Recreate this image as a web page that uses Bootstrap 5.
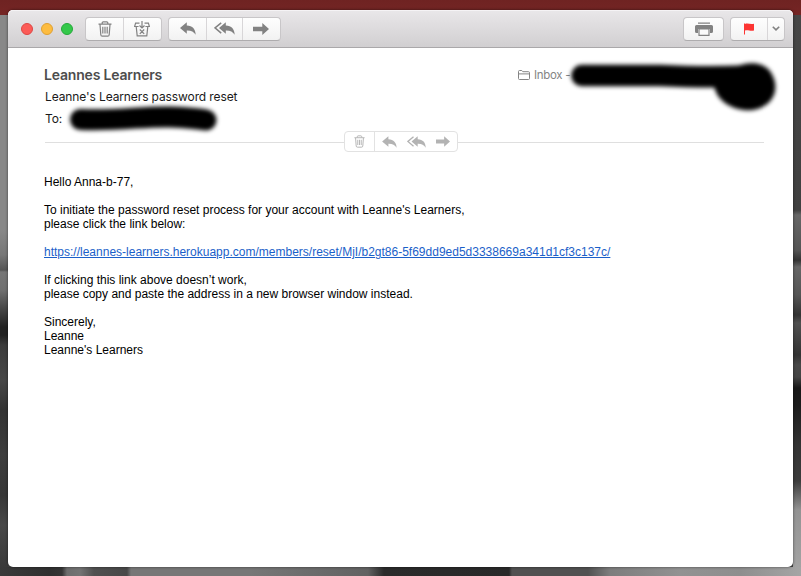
<!DOCTYPE html>
<html lang="en">
<head>
<meta charset="utf-8">
<title>Leanne's Learners password reset</title>
<meta name="viewport" content="width=device-width, initial-scale=1">
<link href="https://cdn.jsdelivr.net/npm/bootstrap@5.3.0/dist/css/bootstrap.min.css" rel="stylesheet">
<style>
body{height:576px;padding:10px 8px 9px;font-family:Inter,"Liberation Sans",sans-serif;font-size:12px;
 background:
 linear-gradient(#6f2322,#752524) 0 0/100% 15px no-repeat,
 linear-gradient(90deg,#3a3a3a 0,#303030 50px,#353535 62px,#6d6d6d 67px,#747474 80px,#505050 94px,#484848 127px,#777 131px,#777 250px,#626262 368px,#2b2b2b 384px,#292929 509px,#515151 512px,#515151 588px,#7d7d7d 610px,#929292 680px,#8e8e8e 740px,#a5a5a5 801px) 0 567px/100% 9px no-repeat,
 linear-gradient(#888 0,#888 215px,#777 240px,#555 255px,#777 257px,#707070 275px,#4a4a4a 292px,#222 312px,#222 320px,#3c3c3c 330px,#474747 365px,#333 395px,#3d3d3d 440px,#373737 480px,#484848 510px,#3a3a3a 552px) 0 15px/8px 552px no-repeat,
 linear-gradient(#464646 0,#404040 195px,#666 200px,#555 235px,#333 245px,#666 252px,#555 280px,#333 300px,#505050 308px,#333 340px,#484848 350px,#444 362px,#181818 373px,#1c1c1c 390px,#333 430px,#3c3c3c 466px,#939393 495px,#a3a3a3 552px) 793px 15px/8px 552px no-repeat #444}
svg{display:block;flex:none}
.mail-window{height:557px;border-radius:5px;box-shadow:0 0 3px rgba(0,0,0,.55)}
.toolbar{height:38px;padding:0 8px 0 13px;background:linear-gradient(#e9e7e9,#d1cfd1);border-bottom:1px solid #aaa8aa;border-radius:5px 5px 0 0;box-shadow:inset 0 1px #f5f3f5}
.light{width:12px;height:12px;border:1px solid;border-radius:50%}
.close-light{background:#fc5b57;border-color:#dd4644}
.min-light{background:#fdbc40;border-color:#dfa032}
.zoom-light{background:#34c84a;border-color:#25a83a}
.tool-group{height:24px;border:1px solid #c8c6c8;border-bottom-color:#aeacae;border-radius:4px;background:linear-gradient(#fefefe,#f2f2f2)}
.tool-group+.tool-group{margin-left:6px}
.file-tools{margin-left:12px}
.tool-group .btn{padding:0;border:0;border-radius:0;height:22px;color:#828282}
.tool-group .btn+.btn{border-left:1px solid #d8d6d8}
.w-a{width:37px}.w-b{width:36px}.w-d{width:38px}.w-p{width:39px}.w-f{width:36px}.w-c{width:17px}
.tool-group .w-d{padding-right:2px}
.message{padding:17px 29px 0 36px;color:#1a1a1a}
.sender{font-size:14px;line-height:20px;font-weight:600;color:#4d4d4d;letter-spacing:-.19px}
.folder-label{width:246px;font-size:11.5px;line-height:20px;color:#848484;letter-spacing:-.3px}
.subject,.recipient{line-height:20px;margin-top:2px;padding-left:1px;letter-spacing:-.11px}
.actions{margin-top:2px;padding-left:1px}
.rule{height:1px;margin-top:1px;background:#dfdfdf}
.rule-start{width:299px}
.quick{width:114px;height:21px;border:1px solid #e2e2e2;border-radius:4px;color:#b3b3b3}
.quick-trash{width:30px;height:19px;border-right:1px solid #e2e2e2}
.quick-replies{padding:0 7px}
.mail-text{font-family:"Liberation Sans",Arial,sans-serif;font-size:12px;line-height:14px;color:#000;margin-top:23px}
.mail-text p{margin:0 0 14px}
.mail-text a{color:#1b5fc9}
.redaction{left:0;top:0;pointer-events:none}
</style>
<script src="https://cdn.jsdelivr.net/npm/bootstrap@5.3.0/dist/js/bootstrap.bundle.min.js"></script>
</head>
<body class="overflow-hidden">
<svg width="0" height="0" class="position-absolute"><defs>
<symbol id="trash" viewBox="0 0 14 16"><path d="M.5 3.2h13M4.2 3V1.8q0-1 1-1h3.6q1 0 1 1V3M2 3.5l.8 10.2q.1 1.5 1.5 1.5h5.4q1.4 0 1.5-1.5L12 3.5M4.8 5.8v6.7M7 5.8v6.7M9.2 5.8v6.7" fill="none" stroke="currentColor" stroke-width="1.2"/></symbol>
<symbol id="reply" viewBox="0 0 16 13"><path d="M0 5.9 6.8.2v3.2C12.6 3.6 15.6 7 15.7 12.8 13.8 9.7 11.3 8.3 6.8 8.4v3.3z" fill="currentColor"/></symbol>
<symbol id="reply-all" viewBox="0 0 21 13"><path d="M5 5.9 11.8.2v3.2c5.8.2 8.8 3.6 8.9 9.4-1.9-3.1-4.4-4.5-8.9-4.4v3.3z" fill="currentColor"/><path d="M7.2.8 1 5.9l6.2 5.2" fill="none" stroke="currentColor" stroke-width="1.5"/></symbol>
<symbol id="forward" viewBox="0 0 16 12"><path d="M0 3.8h9.3V0L16 6l-6.7 6V8.2H0z" fill="currentColor"/></symbol>
</defs></svg>
<main class="mail-window bg-white position-relative">
<header class="toolbar d-flex align-items-center">
 <div class="d-flex me-auto align-items-center">
  <div class="d-flex gap-2"><span class="light close-light"></span><span class="light min-light"></span><span class="light zoom-light"></span></div>
  <div class="tool-group file-tools d-flex">
   <button class="btn w-a d-flex align-items-center justify-content-center" aria-label="Delete"><svg width="14" height="16"><use href="#trash"/></svg></button>
   <button class="btn w-d d-flex align-items-center justify-content-center" aria-label="Junk"><svg width="16" height="16" viewBox="0 0 16 16" fill="none" stroke="currentColor" stroke-width="1.2"><path d="M5.5 2.1H1.6L.6 5.5h4M10.5 2.1h3.9l1 3.4h-4M2.2 5.5l1 9.3h9.6l1-9.3M8 0v6.8M5.5 4.5 8 7l2.5-2.5M5.8 8.5l4.4 4.4M10.2 8.5l-4.4 4.4"/></svg></button>
  </div>
  <div class="tool-group d-flex">
   <button class="btn w-a d-flex align-items-center justify-content-center" aria-label="Reply"><svg width="16" height="13"><use href="#reply"/></svg></button>
   <button class="btn w-b d-flex align-items-center justify-content-center" aria-label="Reply all"><svg width="21" height="13"><use href="#reply-all"/></svg></button>
   <button class="btn w-d d-flex align-items-center justify-content-center" aria-label="Forward"><svg width="16" height="12"><use href="#forward"/></svg></button>
  </div>
 </div>
 <div class="tool-group d-flex"><button class="btn w-p d-flex align-items-center justify-content-center" aria-label="Print"><svg width="18" height="14" viewBox="0 0 18 14"><path d="M3 .5h12v1.3H3zM1.5 3h15Q18 3 18 4.5v5Q18 11 16.5 11H15V7H3v4H1.5Q0 11 0 9.5v-5Q0 3 1.5 3z" fill="currentColor"/><path d="M4 7h10v6.4H4z" fill="#fafafa" stroke="currentColor" stroke-width="1.2"/><path d="M2 4h14v3H2z" fill="currentColor"/></svg></button></div>
 <div class="tool-group d-flex">
  <button class="btn w-f d-flex align-items-center justify-content-center" aria-label="Flag"><svg width="10" height="12" viewBox="0 0 10 12"><path d="M0 .6h1V1c3-1.2 5 .8 9-.2v6.6C6 8.4 4 6.4 1 7.5v4H0z" fill="#fc3533"/></svg></button>
  <button class="btn w-c d-flex align-items-center justify-content-center" aria-label="Flag options"><svg width="8" height="5" viewBox="0 0 8 5"><path d="M.8.7 4 3.9 7.2.7" fill="none" stroke="currentColor" stroke-width="1.6"/></svg></button>
 </div>
</header>
<article class="message">
 <div class="d-flex justify-content-between">
  <div class="sender"><span>Leannes Learners</span></div>
  <div class="folder-label d-flex align-items-center"><svg width="12" height="10" viewBox="0 0 12 10" class="me-1"><path d="M.5 8.5v-7q0-1 1-1h2.3l1 1.2h5.7q1 0 1 1v5.8q0 1-1 1h-9q-1 0-1-1zM.5 3.9h11" fill="none" stroke="#848484"/></svg><span>Inbox -</span></div>
 </div>
 <div class="subject"><span>Leanne's Learners password reset</span></div>
 <div class="recipient"><span>To:</span></div>
 <div class="actions d-flex align-items-center">
  <div class="rule rule-start"></div>
  <div class="quick d-flex align-items-center">
   <span class="quick-trash d-flex align-items-center justify-content-center"><svg width="11" height="13"><use href="#trash"/></svg></span>
   <span class="quick-replies d-flex align-items-center flex-fill justify-content-between"><svg width="15" height="12"><use href="#reply"/></svg><svg width="19" height="12"><use href="#reply-all"/></svg><svg width="14" height="11"><use href="#forward"/></svg></span>
  </div>
  <div class="rule flex-fill"></div>
 </div>
 <div class="mail-text">
  <p>Hello Anna-b-77,</p>
  <p>To initiate the password reset process for your account with Leanne's Learners,<br>please click the link below:</p>
  <p><a href="#">https://leannes-learners.herokuapp.com/members/reset/MjI/b2gt86-5f69dd9ed5d3338669a341d1cf3c137c/</a></p>
  <p>If clicking this link above doesn’t work,<br>please copy and paste the address in a new browser window instead.</p>
  <p>Sincerely,<br>Leanne<br>Leanne's Learners</p>
 </div>
</article>
<svg class="redaction position-absolute" width="785" height="140" viewBox="8 10 785 140" aria-hidden="true">
 <defs><filter id="soft" x="-10%" y="-30%" width="120%" height="160%"><feGaussianBlur stdDeviation="1.9"/></filter></defs>
 <g filter="url(#soft)"><path d="M80.500 119.500C120 121 145 116 170 117S200 119 206 120" fill="none" stroke="#000" stroke-width="21" stroke-linecap="round"/>
 <path d="M582 75.500H660C690 77 715 77.500 745 76" fill="none" stroke="#000" stroke-width="21.500" stroke-linecap="round"/><path d="M735 67C748 61 763 62 770 71C781 87 775 106 753 110C735 112 716 102 714 85z"/></g>
</svg>
</main>
</body>
</html>
